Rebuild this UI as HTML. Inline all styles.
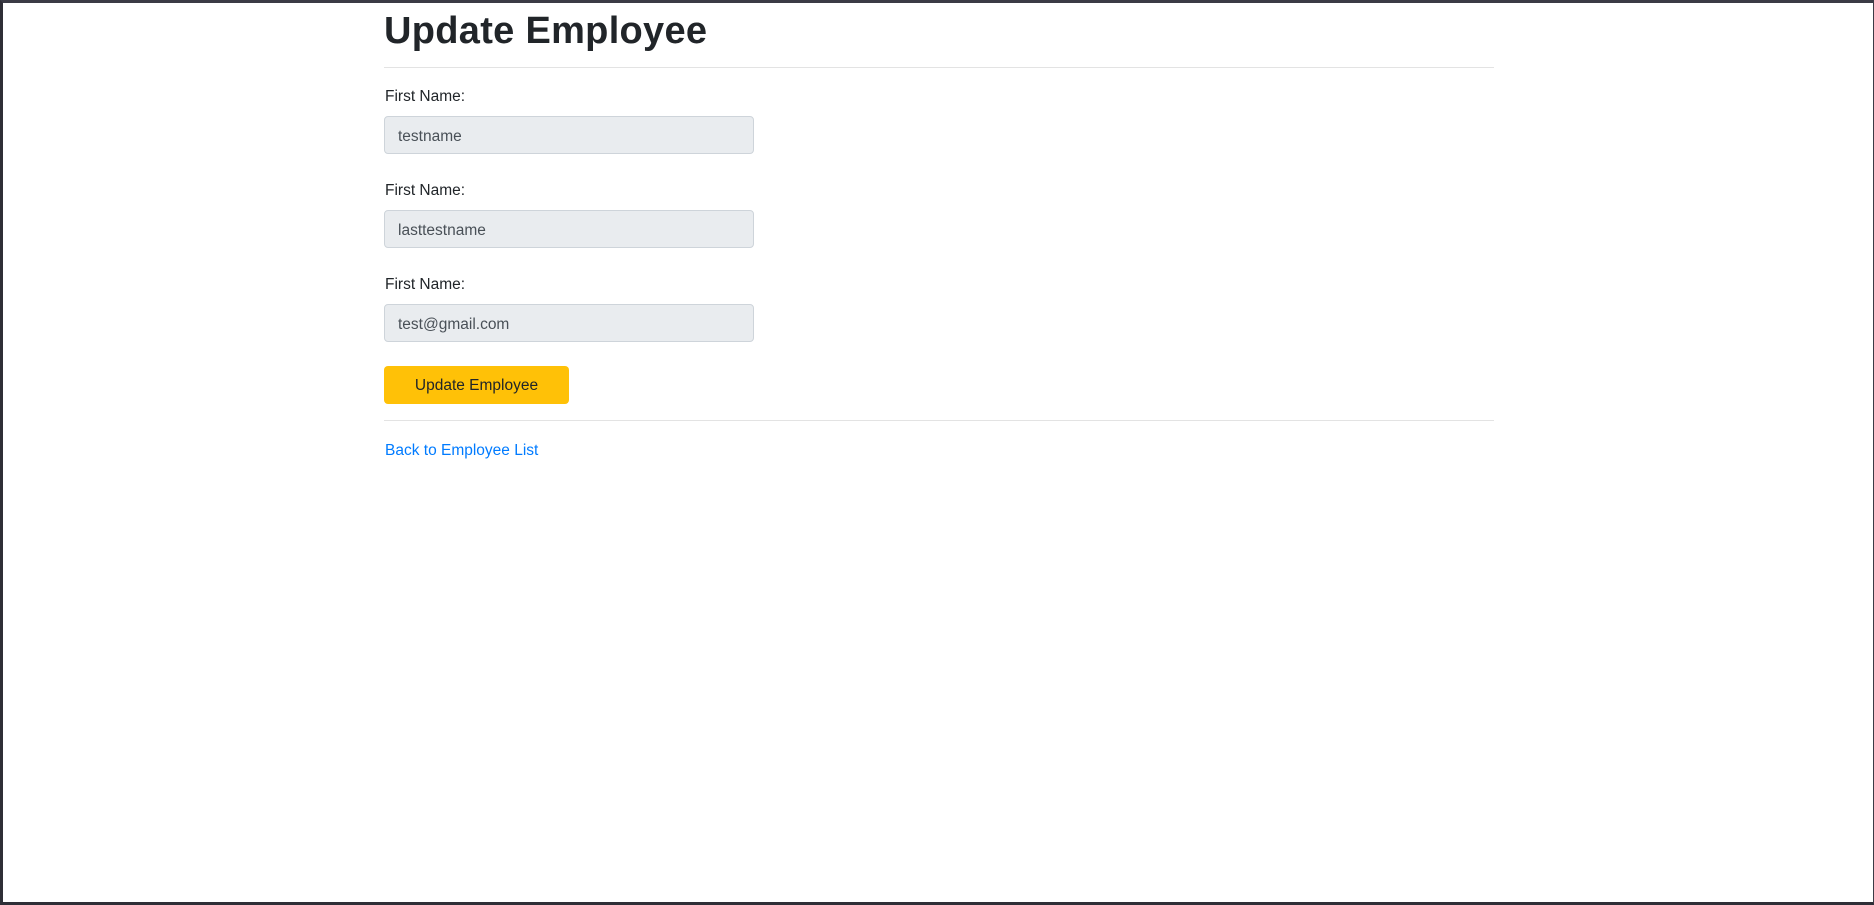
<!DOCTYPE html>
<html><head><meta charset="utf-8"><style>
html,body{margin:0;padding:0;}
body{width:1874px;height:905px;overflow:hidden;background:#fff;position:relative;font-family:"Liberation Sans",sans-serif;color:#212529;}
.frame{position:absolute;left:0;top:0;width:1874px;height:905px;box-sizing:border-box;border-top:3px solid #3b3b45;border-left:3px solid #2e2e36;border-bottom:3px solid #2e2e36;border-right:1px solid #3b3b45;}
h1{position:absolute;left:384px;top:5px;margin:0;font-size:38px;font-weight:bold;line-height:52px;color:#212529;letter-spacing:0.3px;}
.hr{position:absolute;left:384px;width:1110px;height:1px;background:#e3e3e3;}
.lbl{position:absolute;left:385px;font-size:15.5px;line-height:20px;color:#212529;}
.inp{position:absolute;left:384px;width:370px;height:38px;box-sizing:border-box;background:#e9ecef;border:1px solid #ced4da;border-radius:4px;padding-left:13px;font-size:15.5px;line-height:40px;color:#495057;}
.btn{position:absolute;left:384px;top:366px;width:185px;height:38px;background:#ffc107;border-radius:4px;text-align:center;font-size:15.5px;line-height:39px;color:#212529;}
a{position:absolute;left:385px;top:440px;font-size:15.5px;line-height:22px;color:#007bff;text-decoration:none;}
</style></head><body>
<div class="frame"></div>
<h1>Update Employee</h1>
<div class="hr" style="top:67px"></div>
<div class="lbl" style="top:87px">First Name:</div>
<div class="inp" style="top:116px">testname</div>
<div class="lbl" style="top:181px">First Name:</div>
<div class="inp" style="top:210px">lasttestname</div>
<div class="lbl" style="top:275px">First Name:</div>
<div class="inp" style="top:304px">test@gmail.com</div>
<div class="btn">Update Employee</div>
<div class="hr" style="top:420px"></div>
<a>Back to Employee List</a>
</body></html>
